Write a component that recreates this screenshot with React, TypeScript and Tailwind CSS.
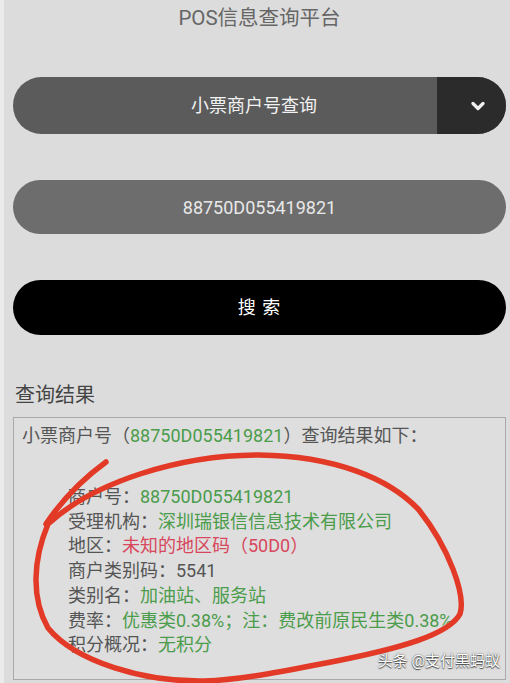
import React from "react";

const green = "text-[#4b9c4b]";

interface Row {
  label: string;
  value: string;
  tone: string;
}

const rows: Row[] = [
  { label: "商户号：", value: "88750D055419821", tone: green },
  { label: "受理机构：", value: "深圳瑞银信信息技术有限公司", tone: green },
  { label: "地区：", value: "未知的地区码（50D0）", tone: "text-[#d8485c]" },
  { label: "商户类别码：", value: "5541", tone: "text-[#555555]" },
  { label: "类别名：", value: "加油站、服务站", tone: green },
  { label: "费率：", value: "优惠类0.38%；注：费改前原民生类0.38%", tone: green },
  { label: "积分概况：", value: "无积分", tone: green },
];

export default function App() {
  return (
    <div
      className="relative w-[510px] h-[683px] overflow-hidden bg-[#dcdcdc] border-l-4 border-[#ebebeb] pl-[9px] pr-[4px]"
      style={{ fontFamily: 'Roboto, "Noto Sans CJK SC", sans-serif' }}
    >
      <h1 className="mt-[6px] h-[24px] leading-[24px] text-center text-[20.5px] text-[#666666] font-normal">
        POS信息查询平台
      </h1>

      <div className="mt-[47px] h-[57px] rounded-full bg-[#5b5b5b] flex overflow-hidden">
        <div className="flex-1 flex items-center justify-center pl-[58px] text-[18px] text-[#f2f2f2]">
          小票商户号查询
        </div>
        <div className="w-[69px] bg-[#2b2b2b] flex items-center justify-start pl-[34px]">
          <svg width="14" height="10" viewBox="0 0 14 10">
            <path d="M2 2.5 L7 7.5 L12 2.5" fill="none" stroke="#f0f0f0" strokeWidth="3.2" strokeLinecap="round" strokeLinejoin="round" />
          </svg>
        </div>
      </div>

      <div className="mt-[46px] h-[54px] rounded-full bg-[#6d6d6d] flex items-center justify-center text-[18px] text-[#e8e8e8]">
        88750D055419821
      </div>

      <button className="mt-[46px] w-full h-[55px] rounded-full bg-black text-white text-[18px] flex items-center justify-center tracking-[1px]">
        搜 索
      </button>

      <h2 className="mt-[46px] leading-[28px] text-[20px] text-[#444444] pl-[2px]">查询结果</h2>

      <div className="mt-[8px] h-[263px] border border-[#a9a9a9] bg-[#dedede] pt-[5px] pl-[8px] text-[18px] text-[#555555]">
        <p className="leading-[25px]">
          小票商户号（<span className={green}>88750D055419821</span>）查询结果如下：
        </p>
        <div className="mt-[37px] pl-[46px] leading-[24.7px]">
          {rows.map((row) => (
            <p key={row.label}>
              {row.label}
              <span className={row.tone}>{row.value}</span>
            </p>
          ))}
        </div>
      </div>

      <svg className="absolute inset-0 pointer-events-none" width="510" height="683" viewBox="0 0 510 683">
        <g fill="none" stroke="#e23a26" strokeWidth="5.5" strokeLinecap="round" strokeLinejoin="round">
          <path d="M102 462 C80 478 58 500 42 524" />
          <path d="M44 524 C90 482 175 455 255 455 C330 456 385 478 415 510 C445 548 462 595 456 614 C445 634 400 648 322 663 C270 673 235 680 200 681 C140 682 72 662 44 628 C27 598 29 560 44 524" />
        </g>
      </svg>

      <div
        className="absolute right-[10px] bottom-[11px] text-[15px] text-white"
        style={{ textShadow: "0 0 2px rgba(0,0,0,0.7), 0 1px 1px rgba(0,0,0,0.6)" }}
      >
        头条 @支付黑蚂蚁
      </div>
    </div>
  );
}
